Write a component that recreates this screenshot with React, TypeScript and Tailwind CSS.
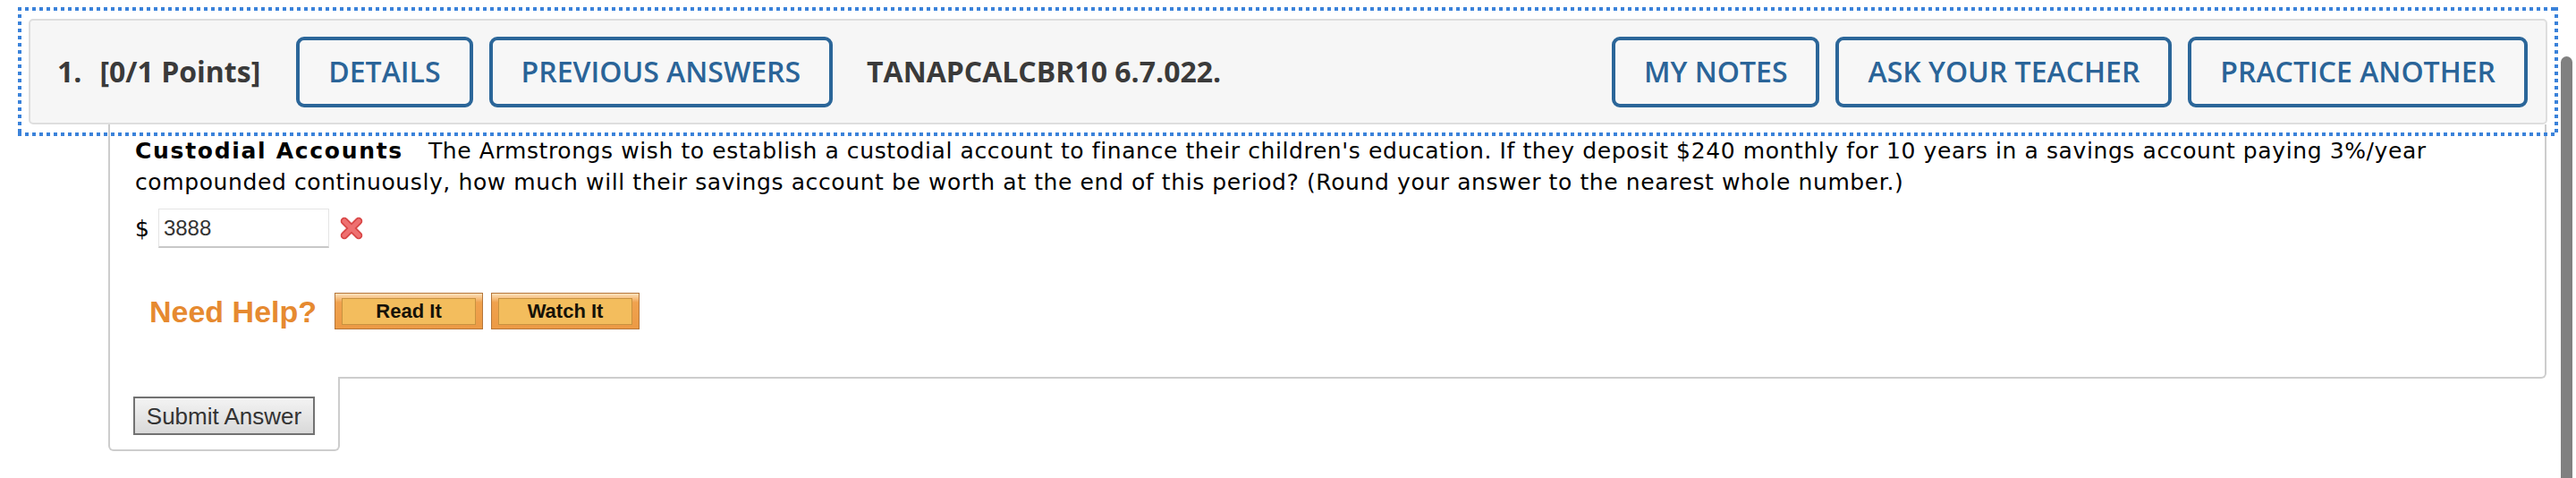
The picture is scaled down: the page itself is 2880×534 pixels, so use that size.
import type { ReactNode } from 'react'

function HeaderButton({ children, className = '' }: { children: ReactNode; className?: string }) {
  return (
    <button
      className={`flex h-[79px] items-center rounded-[9px] border-4 border-[#2b6699] bg-[#f7f7f7] px-[32px] text-[32px] font-semibold text-[#2a6498] ${className}`}
    >
      {children}
    </button>
  )
}

function FocusRing() {
  return (
    <div className="pointer-events-none absolute -bottom-[15px] -left-[14px] -right-[14px] -top-[15px] z-10">
      <div className="absolute inset-x-0 top-0 h-[4px] bg-[repeating-linear-gradient(90deg,#3a82da_0_4px,transparent_4px_8px)]" />
      <div className="absolute inset-x-0 bottom-0 h-[4px] bg-[repeating-linear-gradient(90deg,#3a82da_0_4px,transparent_4px_8px)]" />
      <div className="absolute inset-y-0 left-0 w-[4px] bg-[repeating-linear-gradient(180deg,#3a82da_0_4px,transparent_4px_8px)]" />
      <div className="absolute inset-y-0 right-0 w-[4px] bg-[repeating-linear-gradient(180deg,#3a82da_0_4px,transparent_4px_8px)]" />
    </div>
  )
}

function HelpButton({ label }: { label: string }) {
  return (
    <div className="flex h-[41px] w-[166px] border border-[#b5763a] bg-[linear-gradient(#fde2bd,#f0a24e_25%,#ec9a45)] px-[7px] pb-[4px] pt-[5px]">
      <div className="flex flex-1 items-center justify-center border border-[#c8923f] bg-[#f3bd5d] font-['Liberation_Sans',Arial,sans-serif] text-[22px] font-bold leading-none text-[#161208]">
        {label}
      </div>
    </div>
  )
}

function WrongMark() {
  return (
    <svg width="28" height="26" viewBox="0 0 28 26" className="ml-[11px]">
      <path d="M6 5 L22 21 M22 5 L6 21" stroke="#d84646" strokeWidth="8.5" strokeLinecap="round" />
      <path d="M6 5 L22 21 M22 5 L6 21" stroke="#ee7070" strokeWidth="5" strokeLinecap="round" />
    </svg>
  )
}

export default function App() {
  return (
    <div className="relative h-[534px] overflow-hidden bg-white">
      <div className="px-[32px] pt-[21px]">
        {/* question header */}
        <div className="relative flex h-[118px] items-center rounded-[5px] border-2 border-[#dedede] bg-[#f6f6f6] pl-[30px] pr-[20px] font-['Open_Sans',sans-serif]">
          <FocusRing />
          <span className="text-[32px] font-bold text-[#3a3a3a]">1.</span>
          <span className="ml-[20px] text-[32px] font-bold text-[#3a3a3a]">[0/1 Points]</span>
          <HeaderButton className="ml-[40px]">DETAILS</HeaderButton>
          <HeaderButton className="ml-[18px]">PREVIOUS ANSWERS</HeaderButton>
          <span className="ml-[38px] text-[32px] font-bold text-[#3a3a3a]">TANAPCALCBR10 6.7.022.</span>
          <HeaderButton className="ml-auto">MY NOTES</HeaderButton>
          <HeaderButton className="ml-[18px]">ASK YOUR TEACHER</HeaderButton>
          <HeaderButton className="ml-[18px]">PRACTICE ANOTHER</HeaderButton>
        </div>

        {/* question body */}
        <div className="ml-[89px] mr-[1px] font-['DejaVu_Sans',Verdana,sans-serif]">
          <div className="rounded-br-[6px] border-x-2 border-b-2 border-[#cdcdcd] pb-[53px] pl-[28px] pr-[24px] pt-[12px]">
            <p className="text-[25px] leading-[35px] tracking-[0.6px] text-black">
              <span className="mr-[28px] font-bold tracking-[1.7px]">Custodial Accounts</span>
              The Armstrongs wish to establish a custodial account to finance their children's education. If they deposit
              $240 monthly for 10 years in a savings account paying 3%/year compounded continuously, how much will their
              savings account be worth at the end of this period? (Round your answer to the nearest whole number.)
            </p>

            <div className="mt-[12px] flex items-center">
              <span className="text-[25px] leading-none text-black">$</span>
              <input
                readOnly
                value="3888"
                className="ml-[10px] h-[44px] w-[191px] border border-b-2 border-[#e4e4e4] border-b-[#c8c8c8] bg-white pl-[5px] font-['Liberation_Sans',Arial,sans-serif] text-[24px] text-[#333] outline-none"
              />
              <WrongMark />
            </div>

            <div className="mt-[50px] flex items-center pl-[16px]">
              <span className="font-['Liberation_Sans',Arial,sans-serif] text-[34px] font-bold leading-none text-[#e68a30]">
                Need Help?
              </span>
              <div className="ml-[20px] flex gap-[9px]">
                <HelpButton label="Read It" />
                <HelpButton label="Watch It" />
              </div>
            </div>
          </div>

          <div className="relative -mt-[2px] w-[259px] rounded-b-[6px] border-x-2 border-b-2 border-[#cdcdcd] bg-white px-[26px] pb-[16px] pt-[22px]">
            <button className="h-[43px] w-[203px] border-2 border-[#727272] bg-[linear-gradient(#f3f3f3,#d9d9d9)] font-['Liberation_Sans',Arial,sans-serif] text-[26px] leading-none text-[#333]">
              Submit Answer
            </button>
          </div>
        </div>
      </div>

      {/* overlay scrollbar thumb */}
      <div className="absolute right-[4px] top-[63px] h-[520px] w-[13px] rounded-full bg-[#808080]" />
    </div>
  )
}
